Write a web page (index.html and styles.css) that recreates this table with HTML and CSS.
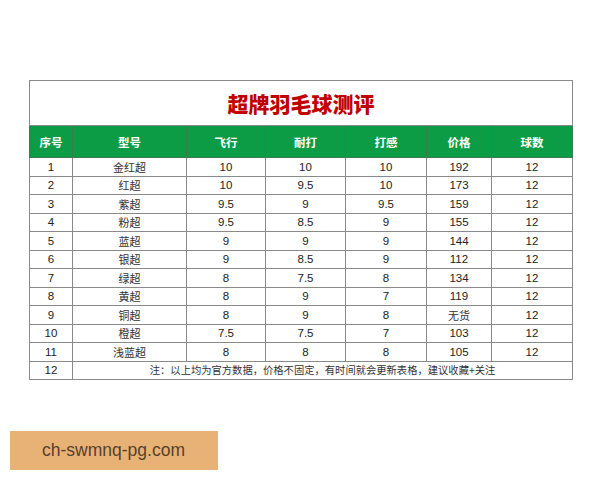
FILE: index.html
```html
<!DOCTYPE html>
<html lang="zh">
<head>
<meta charset="utf-8">
<link rel="stylesheet" href="styles.css">
</head>
<body>
<div class="page">
<table class="sheet">
<colgroup>
<col class="c1"><col class="c2"><col class="c3"><col class="c4"><col class="c5"><col class="c6"><col class="c7">
</colgroup>
<tr class="title-row"><td colspan="7" class="title">超牌羽毛球测评</td></tr>
<tr class="head"><th>序号</th><th>型号</th><th>飞行</th><th>耐打</th><th>打感</th><th>价格</th><th>球数</th></tr>
<tr><td>1</td><td class="cn">金红超</td><td>10</td><td>10</td><td>10</td><td>192</td><td>12</td></tr>
<tr><td>2</td><td class="cn">红超</td><td>10</td><td>9.5</td><td>10</td><td>173</td><td>12</td></tr>
<tr><td>3</td><td class="cn">紫超</td><td>9.5</td><td>9</td><td>9.5</td><td>159</td><td>12</td></tr>
<tr><td>4</td><td class="cn">粉超</td><td>9.5</td><td>8.5</td><td>9</td><td>155</td><td>12</td></tr>
<tr><td>5</td><td class="cn">蓝超</td><td>9</td><td>9</td><td>9</td><td>144</td><td>12</td></tr>
<tr><td>6</td><td class="cn">银超</td><td>9</td><td>8.5</td><td>9</td><td>112</td><td>12</td></tr>
<tr><td>7</td><td class="cn">绿超</td><td>8</td><td>7.5</td><td>8</td><td>134</td><td>12</td></tr>
<tr><td>8</td><td class="cn">黄超</td><td>8</td><td>9</td><td>7</td><td>119</td><td>12</td></tr>
<tr><td>9</td><td class="cn">铜超</td><td>8</td><td>9</td><td>8</td><td class="cn">无货</td><td>12</td></tr>
<tr><td>10</td><td class="cn">橙超</td><td>7.5</td><td>7.5</td><td>7</td><td>103</td><td>12</td></tr>
<tr><td>11</td><td class="cn">浅蓝超</td><td>8</td><td>8</td><td>8</td><td>105</td><td>12</td></tr>
<tr><td>12</td><td colspan="6" class="cn note">注：以上均为官方数据，价格不固定，有时间就会更新表格，建议收藏+关注</td></tr>
</table>
<div class="mark">ch-swmnq-pg.com</div>
</div>
</body>
</html>
```
FILE: styles.css
```css
html, body {
  margin: 0;
  padding: 0;
  background: #ffffff;
}
.page {
  padding: 80px 0 0 29px;
  font-family: "Liberation Sans", "Noto Sans CJK SC", sans-serif;
}
.sheet {
  border-collapse: collapse;
  table-layout: fixed;
  width: 543px;
  color: #222;
}
.c1 { width: 43px; }
.c2 { width: 114px; }
.c3 { width: 79px; }
.c4 { width: 80px; }
.c5 { width: 81px; }
.c6 { width: 65px; }
.c7 { width: 81px; }
.sheet td, .sheet th {
  border: 1px solid #8a8a8a;
  padding: 0;
  text-align: center;
  font-size: 11.5px;
  line-height: 14px;
  height: 17.5px;
}
.sheet td.cn {
  font-family: "Noto Sans CJK SC", sans-serif;
  font-size: 11px;
  color: #333;
}
.title-row td.title {
  height: 44px;
  font-family: "Noto Sans CJK SC", sans-serif;
  font-weight: 900;
  font-size: 21px;
  color: #c00000;
}
.head th {
  height: 31px;
  background: #0c9c46;
  color: #ffffff;
  font-family: "Noto Sans CJK SC", sans-serif;
  font-weight: 700;
  font-size: 11.5px;
  border-color: #3f7a52;
}
.sheet td.note {
  font-size: 10.3px;
}
.mark {
  margin: 51px 0 0 -19px;
  width: 208px;
  height: 39px;
  background: #e8b277;
  color: #56422a;
  font-family: "Liberation Sans", sans-serif;
  font-size: 17.5px;
  line-height: 39px;
  padding-left: 32px;
  box-sizing: border-box;
}
```
